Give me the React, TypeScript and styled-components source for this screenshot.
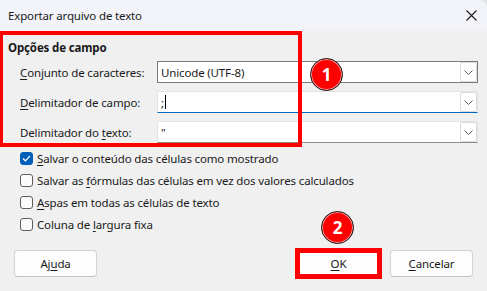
import React from "react";
import styled, { createGlobalStyle } from "styled-components";

const GlobalStyle = createGlobalStyle`
  html, body { margin: 0; padding: 0; background: #dfe1e6; }
  body { font-family: "Noto Sans", "Open Sans", sans-serif; }
  * { box-sizing: border-box; }
`;

const Window = styled.div`
  width: 487px;
  height: 291px;
  overflow: hidden;
  display: flex;
  flex-direction: column;
  background: #f0f0f0;
  border-top-right-radius: 8px;
  font-size: 11.5px;
  letter-spacing: -0.15px;
  color: #1a1a1a;
`;

const TitleBar = styled.div`
  height: 31px;
  flex: none;
  display: flex;
  align-items: center;
  justify-content: space-between;
  padding: 0 10px 0 8px;
  background: #f3f4f9;
  color: #1b1b1b;
`;

const Body = styled.div`
  position: relative;
  flex: 1;
  display: flex;
  flex-direction: column;
  padding: 8px 0 0 0;
`;

const Heading = styled.div`
  font-weight: 700;
  padding-left: 8px;
  line-height: 17px;
`;

const FormGrid = styled.div`
  display: grid;
  grid-template-columns: 137px 321px;
  grid-auto-rows: 22px;
  row-gap: 8px;
  padding-left: 20px;
  margin-top: 5px;
  align-items: center;
`;

const Label = styled.label`
  white-space: nowrap;
`;

const U = styled.span`
  text-decoration: underline;
  text-underline-offset: 2px;
`;

const Field = styled.div<{ $variant: "box" | "focus" | "plain" }>`
  height: 22px;
  position: relative;
  display: flex;
  align-items: center;
  padding-left: 3px;
  background: #ffffff;
  border: 1px solid ${(p) => (p.$variant === "box" ? "#7a7a7a" : "#e3e3e3")};
  border-bottom-color: ${(p) =>
    p.$variant === "focus" ? "#0067c0" : p.$variant === "box" ? "#7a7a7a" : "#8c8c8c"};
`;

const Caret = styled.span`
  display: inline-block;
  width: 1px;
  height: 14px;
  background: #000;
  margin-left: 1px;
`;

const DropButton = styled.div`
  position: absolute;
  right: 0;
  top: 0;
  bottom: 0;
  width: 17px;
  display: flex;
  align-items: center;
  justify-content: center;
  background: #fff;
  border: 1px solid #dadada;
  border-radius: 2px;
`;

const CheckList = styled.div`
  display: flex;
  flex-direction: column;
  margin-top: 4px;
  padding-left: 20px;
`;

const CheckRow = styled.div`
  height: 22px;
  display: flex;
  align-items: center;
  gap: 4px;
  white-space: nowrap;
`;

const Box = styled.span<{ $checked?: boolean }>`
  width: 13px;
  height: 13px;
  border-radius: 3px;
  flex: none;
  display: flex;
  align-items: center;
  justify-content: center;
  background: ${(p) => (p.$checked ? "#005fb8" : "#fbfbfb")};
  border: 1px solid ${(p) => (p.$checked ? "#005fb8" : "#5d5d5d")};
`;

const ButtonRow = styled.div`
  display: flex;
  align-items: center;
  margin-top: auto;
  margin-bottom: 14px;
  padding: 0 14px;
  gap: 10px;
`;

const Spacer = styled.div`
  flex: 1;
`;

const Button = styled.div`
  position: relative;
  width: 83px;
  height: 27px;
  display: flex;
  align-items: center;
  justify-content: center;
  background: #fdfdfd;
  border: 1px solid #d3d3d3;
  border-bottom-color: #c4c4c4;
  border-radius: 4px;
`;

const RedFrame = styled.div`
  position: absolute;
  border: 4px solid #ff0000;
  pointer-events: none;
`;

const FieldFrame = styled(RedFrame)`
  left: -1px;
  top: 0;
  width: 303px;
  height: 116px;
`;

const ButtonFrame = styled(RedFrame)`
  left: -3px;
  top: -3px;
  right: -3px;
  bottom: -3px;
  border-width: 5px;
`;

const Badge = styled.div<{ $x: number; $y: number }>`
  position: absolute;
  left: ${(p) => p.$x}px;
  top: ${(p) => p.$y}px;
  width: 33px;
  height: 33px;
  border-radius: 50%;
  background: #ff0000;
  border: 1.5px solid #1e1e1e;
  box-shadow: inset 0 0 0 1px #f4a0a0;
  display: flex;
  align-items: center;
  justify-content: center;
  color: #fff;
  font-family: "Open Sans", "Noto Sans", sans-serif;
  font-weight: 700;
  font-size: 17px;
  letter-spacing: 0;
`;

const Chevron = () => (
  <svg width="9" height="5" viewBox="0 0 9 5">
    <path d="M0.5 0.5 L4.5 4.5 L8.5 0.5" fill="none" stroke="#5a5a5a" strokeWidth="1" />
  </svg>
);

const Check = () => (
  <svg width="9" height="7" viewBox="0 0 9 7">
    <path d="M1 3.5 L3.4 5.8 L8 1" fill="none" stroke="#fff" strokeWidth="1.2" />
  </svg>
);

const CloseIcon = () => (
  <svg width="11" height="11" viewBox="0 0 11 11">
    <path d="M0.5 0.5 L10.5 10.5 M10.5 0.5 L0.5 10.5" stroke="#1b1b1b" strokeWidth="1.1" />
  </svg>
);

const checks: { pre: string; u: string; post: string; checked?: boolean }[] = [
  { pre: "", u: "S", post: "alvar o conteúdo das células como mostrado", checked: true },
  { pre: "Salvar as ", u: "f", post: "órmulas das células em vez dos valores calculados" },
  { pre: "", u: "A", post: "spas em todas as células de texto" },
  { pre: "Coluna de ", u: "l", post: "argura fixa" },
];

export default function App() {
  return (
    <>
      <GlobalStyle />
      <Window>
        <TitleBar>
          <span>Exportar arquivo de texto</span>
          <CloseIcon />
        </TitleBar>
        <Body>
          <Heading>Opções de campo</Heading>
          <FormGrid>
            <Label>
              <U>C</U>onjunto de caracteres:
            </Label>
            <Field $variant="box">
              Unicode (UTF-8)
              <DropButton>
                <Chevron />
              </DropButton>
            </Field>
            <Label>
              <U>D</U>elimitador de campo:
            </Label>
            <Field $variant="focus">
              ;<Caret />
              <DropButton>
                <Chevron />
              </DropButton>
            </Field>
            <Label>
              Delimitador do <U>t</U>exto:
            </Label>
            <Field $variant="plain">
              "
              <DropButton>
                <Chevron />
              </DropButton>
            </Field>
          </FormGrid>
          <CheckList>
            {checks.map((c, i) => (
              <CheckRow key={i}>
                <Box $checked={c.checked}>{c.checked && <Check />}</Box>
                <span>
                  {c.pre}
                  <U>{c.u}</U>
                  {c.post}
                </span>
              </CheckRow>
            ))}
          </CheckList>
          <ButtonRow>
            <Button>
              Aj<U>u</U>da
            </Button>
            <Spacer />
            <Button>
              <U>O</U>K
              <ButtonFrame />
            </Button>
            <Button>
              <U>C</U>ancelar
            </Button>
          </ButtonRow>
          <FieldFrame />
          <Badge $x={310} $y={27}>1</Badge>
          <Badge $x={321} $y={180}>2</Badge>
        </Body>
      </Window>
    </>
  );
}
